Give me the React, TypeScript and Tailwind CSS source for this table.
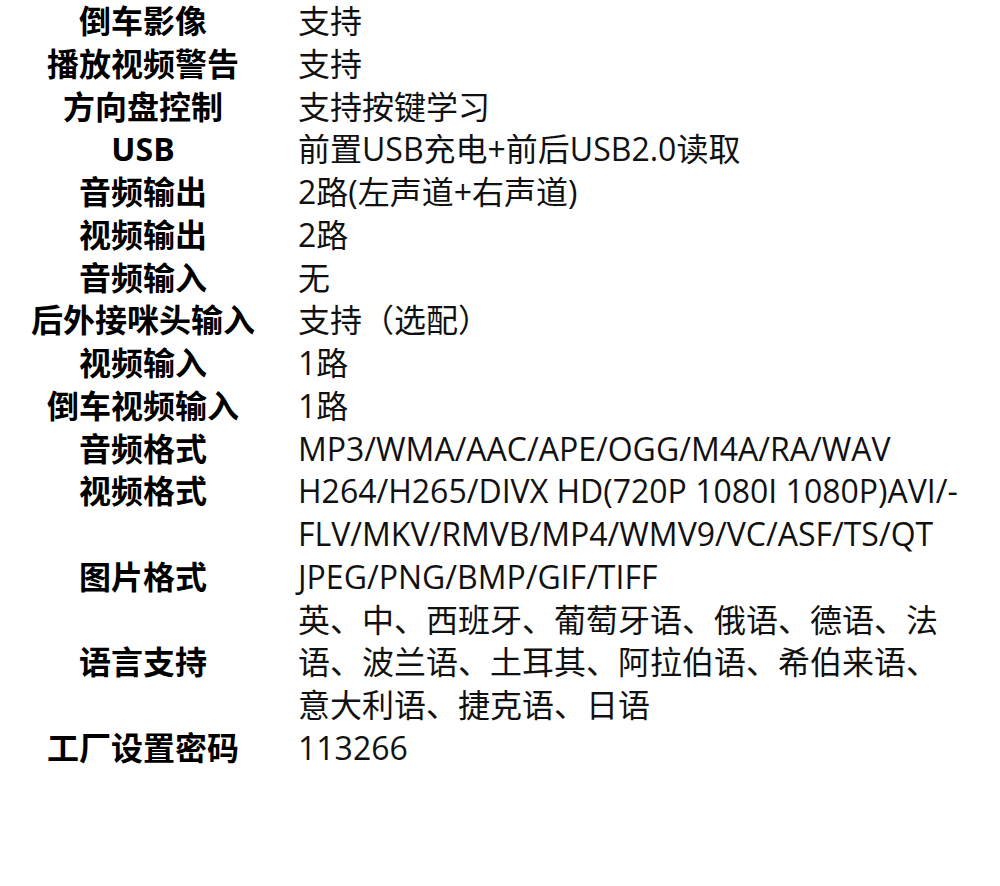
import React from "react";

const rows: { label: string; lines: string[]; top?: boolean }[] = [
  { label: "倒车影像", lines: ["支持"] },
  { label: "播放视频警告", lines: ["支持"] },
  { label: "方向盘控制", lines: ["支持按键学习"] },
  { label: "USB", lines: ["前置USB充电+前后USB2.0读取"] },
  { label: "音频输出", lines: ["2路(左声道+右声道)"] },
  { label: "视频输出", lines: ["2路"] },
  { label: "音频输入", lines: ["无"] },
  { label: "后外接咪头输入", lines: ["支持（选配）"] },
  { label: "视频输入", lines: ["1路"] },
  { label: "倒车视频输入", lines: ["1路"] },
  { label: "音频格式", lines: ["MP3/WMA/AAC/APE/OGG/M4A/RA/WAV"] },
  {
    label: "视频格式",
    lines: ["H264/H265/DIVX HD(720P 1080I 1080P)AVI/-", "FLV/MKV/RMVB/MP4/WMV9/VC/ASF/TS/QT"],
    top: true,
  },
  { label: "图片格式", lines: ["JPEG/PNG/BMP/GIF/TIFF"] },
  {
    label: "语言支持",
    lines: ["英、中、西班牙、葡萄牙语、俄语、德语、法", "语、波兰语、土耳其、阿拉伯语、希伯来语、", "意大利语、捷克语、日语"],
  },
  { label: "工厂设置密码", lines: ["113266"] },
];

export default function App() {
  return (
    <div
      className="w-[1000px] h-[886px] bg-white text-black"
      style={{ fontFamily: '"Open Sans", "Noto Sans CJK SC", sans-serif' }}
    >
      <div className="flex flex-col">
        {rows.map((r) => (
          <div key={r.label} className={r.top ? "flex items-start" : "flex items-center"}>
            <div className="w-[286px] shrink-0 text-center text-[32px] font-bold leading-[42.75px]">{r.label}</div>
            <div className="ml-[12px] flex flex-col text-[32px] leading-[42.75px] text-[#111]">
              {r.lines.map((l) => (
                <div key={l} className="whitespace-nowrap">{l}</div>
              ))}
            </div>
          </div>
        ))}
      </div>
    </div>
  );
}
